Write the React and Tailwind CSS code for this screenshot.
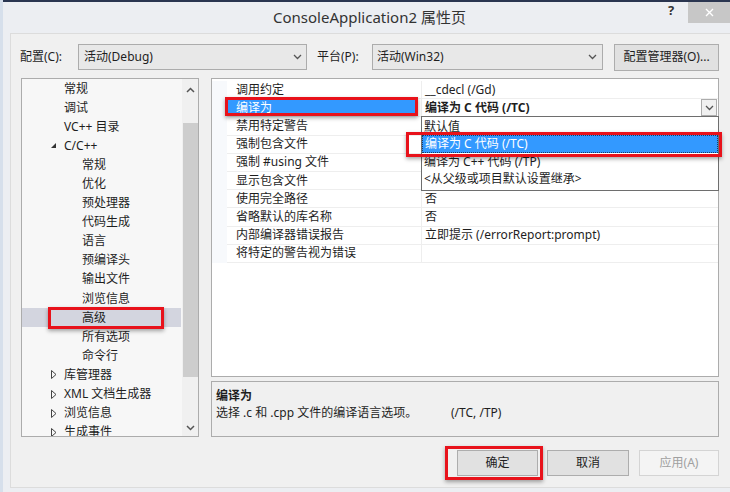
import React from "react";

const FONT = "font-['Noto_Sans','Noto_Sans_CJK_SC',sans-serif]";

function Chevron({ className = "" }) {
  return (
    <svg width="9" height="6" viewBox="0 0 9 6" className={className}>
      <path d="M1 1 L4.5 4.5 L8 1" fill="none" stroke="#555" strokeWidth="1.3" />
    </svg>
  );
}

const tree = [
  { t: "常规", l: 1 },
  { t: "调试", l: 1 },
  { t: "VC++ 目录", l: 1 },
  { t: "C/C++", l: 1, open: true },
  { t: "常规", l: 2 },
  { t: "优化", l: 2 },
  { t: "预处理器", l: 2 },
  { t: "代码生成", l: 2 },
  { t: "语言", l: 2 },
  { t: "预编译头", l: 2 },
  { t: "输出文件", l: 2 },
  { t: "浏览信息", l: 2 },
  { t: "高级", l: 2, sel: true },
  { t: "所有选项", l: 2 },
  { t: "命令行", l: 2 },
  { t: "库管理器", l: 1, closed: true },
  { t: "XML 文档生成器", l: 1, closed: true },
  { t: "浏览信息", l: 1, closed: true },
  { t: "生成事件", l: 1, closed: true },
];

const props = [
  { n: "调用约定", v: "__cdecl (/Gd)" },
  { n: "编译为", v: "编译为 C 代码 (/TC)", sel: true },
  { n: "禁用特定警告", v: "" },
  { n: "强制包含文件", v: "" },
  { n: "强制 #using 文件", v: "" },
  { n: "显示包含文件", v: "" },
  { n: "使用完全路径", v: "否" },
  { n: "省略默认的库名称", v: "否" },
  { n: "内部编译器错误报告", v: "立即提示 (/errorReport:prompt)" },
  { n: "将特定的警告视为错误", v: "" },
];

function TreeRow({ item }) {
  return (
    <div
      className={`relative h-[19.1px] flex items-center text-[12px] leading-none text-[#1e1e1e] ${
        item.sel ? "bg-[#d3d5df]" : ""
      }`}
    >
      {item.open && (
        <span className="absolute left-[29px] top-[7px] w-0 h-0 border-l-[5px] border-l-transparent border-b-[5px] border-b-[#333]" />
      )}
      {item.closed && (
        <svg width="6" height="9" viewBox="0 0 6 9" className="absolute left-[29px] top-[5px]">
          <path d="M0.5 0.5 L5 4.5 L0.5 8.5 Z" fill="none" stroke="#444" strokeWidth="1" />
        </svg>
      )}
      <span className={item.l === 1 ? "pl-[42px]" : "pl-[60px]"}>{item.t}</span>
      {item.sel && (
        <div className="absolute left-[26px] top-[-1px] w-[116px] h-[22px] border-[3px] border-[#e8121b] shadow-[0_2px_4px_rgba(0,0,0,0.35)]" />
      )}
    </div>
  );
}

export default function App() {
  return (
    <div
      className={`${FONT} w-[730px] h-[492px] overflow-hidden bg-[#eceef2] border-l-[3px] border-[#d6dfeb] flex flex-col`}
    >
      {/* title bar */}
      <div className="relative h-[33px] shrink-0 border-t-2 border-[#2a3550] flex items-center justify-center">
        <span className="text-[15px] leading-none text-[#333] pl-[6px]">ConsoleApplication2 属性页</span>
        <span className="absolute left-[665px] top-[2px] text-[13px] font-bold text-[#333] leading-none">?</span>
        <div className="absolute right-0 top-0 w-[42px] h-[21px] bg-[#c7c7c7] flex items-center justify-center">
          <svg width="9" height="9" viewBox="0 0 9 9">
            <path d="M1 1 L8 8 M8 1 L1 8" stroke="#fff" strokeWidth="1.4" />
          </svg>
        </div>
      </div>

      {/* main panel */}
      <div className="ml-[7px] h-[455px] shrink-0 bg-[#f0f0f0] border-l border-t border-b border-[#dcdcdc] pl-[9px] pr-[11px] flex flex-col">
        {/* config row */}
        <div className="mt-[10px] h-[26px] flex items-center text-[12px] text-[#1e1e1e] leading-none">
          <span className="w-[58px]">配置(C):</span>
          <div className="w-[229px] h-[26px] border border-[#acacac] bg-[#e8e8e8] flex items-center pl-[5px] pr-[4px]">
            <span className="flex-1">活动(Debug)</span>
            <Chevron />
          </div>
          <span className="ml-[10px] w-[55px]">平台(P):</span>
          <div className="w-[231px] h-[26px] border border-[#acacac] bg-[#e8e8e8] flex items-center pl-[4px] pr-[5px]">
            <span className="flex-1">活动(Win32)</span>
            <Chevron />
          </div>
          <div className="ml-[11px] w-[105px] h-[27px] border border-[#adadad] bg-[#e1e1e1] flex items-center justify-center">
            配置管理器(O)...
          </div>
        </div>

        {/* tree + grid */}
        <div className="mt-[8px] h-[359px] flex pl-[1px]">
          {/* tree */}
          <div className="w-[178px] h-full border border-[#acacac] bg-[#f7f7f7] flex overflow-hidden">
            <div className="flex-1 pt-[0px]">
              {tree.map((it, i) => (
                <TreeRow key={i} item={it} />
              ))}
            </div>
            <div className="w-[17px] bg-[#f0f0f0] flex flex-col items-center border-l border-[#f7f7f7]">
              <svg width="9" height="6" viewBox="0 0 9 6" className="mt-[8px]">
                <path d="M1 5 L4.5 1.5 L8 5" fill="none" stroke="#555" strokeWidth="1.5" />
              </svg>
              <div className="mt-[30px] w-[15px] h-[254px] bg-[#cdcdcd]" />
              <div className="flex-1" />
              <svg width="9" height="6" viewBox="0 0 9 6" className="mb-[5px]">
                <path d="M1 1 L4.5 4.5 L8 1" fill="none" stroke="#555" strokeWidth="1.5" />
              </svg>
            </div>
          </div>

          {/* right column */}
          <div className="ml-[12px] w-[508px] h-full flex flex-col">
            <div className="relative h-[299px] border border-[#acacac] bg-white pt-[2px] text-[12px] leading-none text-[#1e1e1e]">
              {props.map((p, i) => (
                <div key={i} className="flex h-[18.2px]">
                  <div className="w-[15px] bg-[#f7f9fc]" />
                  <div className="w-[194px] border-b border-[#eeeeee] flex">
                    <div
                      className={`w-[190px] h-full flex items-center pl-[9px] ${
                        p.sel ? "bg-[#3399ff] text-white" : ""
                      }`}
                    >
                      {p.n}
                    </div>
                  </div>
                  <div className="flex-1 border-l border-b border-[#eeeeee] flex items-center pl-[3px]">
                    <span className={`flex-1 ${p.sel ? "font-bold" : ""}`}>{p.v}</span>
                    {p.sel && (
                      <div className="w-[16px] h-[17px] mr-[1px] border border-[#acacac] bg-[#f0f0f0] flex items-center justify-center">
                        <Chevron />
                      </div>
                    )}
                  </div>
                </div>
              ))}

              {/* dropdown list */}
              <div className="absolute left-[209px] top-[37px] w-[298px] h-[75px] border border-[#6e6e6e] bg-white pt-[1px]">
                <div className="h-[17px] flex items-center pl-[2px]">默认值</div>
                <div className="h-[18px] flex items-center pl-[2px] bg-[#3399ff] text-white border border-dotted border-[#1a3d66]">
                  编译为 C 代码 (/TC)
                </div>
                <div className="h-[17px] flex items-center pl-[2px]">编译为 C++ 代码 (/TP)</div>
                <div className="h-[17px] flex items-center pl-[2px]">&lt;从父级或项目默认设置继承&gt;</div>
              </div>

              {/* red highlight boxes */}
              <div className="absolute left-[13px] top-[18px] w-[193px] h-[19px] border-[3px] border-[#e8121b] shadow-[0_2px_4px_rgba(0,0,0,0.35)]" />
              <div className="absolute left-[194px] top-[53px] w-[316px] h-[25px] border-[3px] border-[#e8121b] shadow-[0_2px_4px_rgba(0,0,0,0.35)]" />
            </div>

            <div className="mt-[4px] h-[56px] border border-[#acacac] bg-[#f0f0f0] px-[4px] pt-[5px] text-[12px] leading-[17px] text-[#1e1e1e]">
              <div className="font-bold">编译为</div>
              <div className="flex">
                <span className="w-[235px]">选择 .c 和 .cpp 文件的编译语言选项。</span>
                <span>(/TC, /TP)</span>
              </div>
            </div>
          </div>
        </div>

        {/* buttons */}
        <div className="mt-[13px] h-[26px] flex justify-end text-[12px] leading-none">
          <div className="relative w-[81px] h-[26px] border border-[#adadad] bg-[#e1e1e1] flex items-center justify-center text-[#1e1e1e]">
            确定
            <div className="absolute left-[-13px] top-[-5px] w-[98px] h-[34px] border-[3px] border-[#e8121b] shadow-[0_2px_4px_rgba(0,0,0,0.35)]" />
          </div>
          <div className="ml-[9px] w-[82px] h-[26px] border border-[#adadad] bg-[#e1e1e1] flex items-center justify-center text-[#1e1e1e]">
            取消
          </div>
          <div className="ml-[10px] w-[80px] h-[26px] border border-[#d4d4d4] bg-[#f4f4f4] flex items-center justify-center text-[#a0a0a0]">
            应用(A)
          </div>
        </div>
      </div>
    </div>
  );
}
